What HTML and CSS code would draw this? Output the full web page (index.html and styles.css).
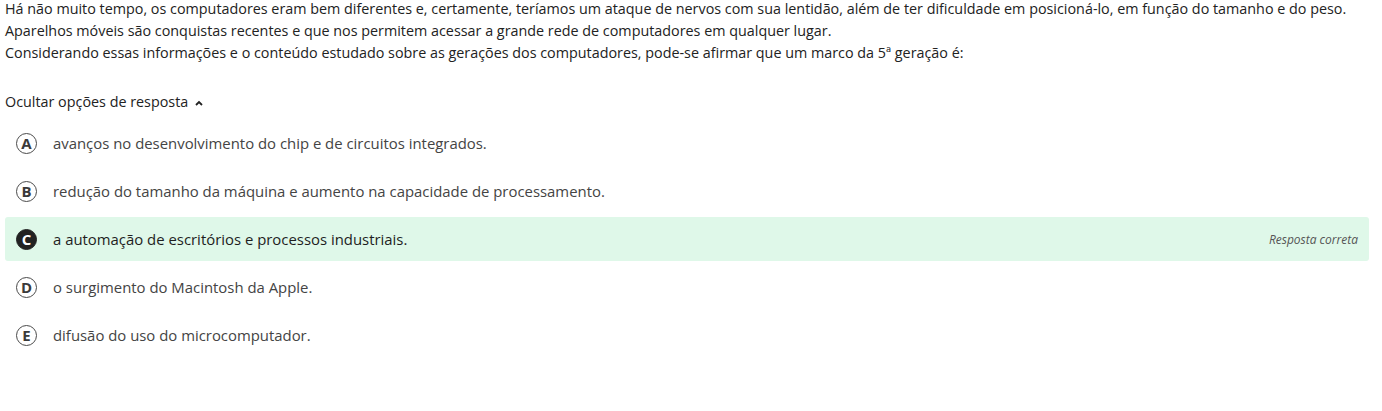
FILE: index.html
```html
<!DOCTYPE html>
<html lang="pt">
<head>
<meta charset="utf-8">
<link rel="stylesheet" href="styles.css">
</head>
<body>
<div class="page">
  <div class="question">
    <p>Há não muito tempo, os computadores eram bem diferentes e, certamente, teríamos um ataque de nervos com sua lentidão, além de ter dificuldade em posicioná-lo, em função do tamanho e do peso.</p>
    <p>Aparelhos móveis são conquistas recentes e que nos permitem acessar a grande rede de computadores em qualquer lugar.</p>
    <p>Considerando essas informações e o conteúdo estudado sobre as gerações dos computadores, pode-se afirmar que um marco da 5ª geração é:</p>
  </div>
  <div class="toggle">Ocultar opções de resposta
    <svg class="chev" width="8" height="6" viewBox="0 0 8 6"><path d="M1 5 L4 2 L7 5" fill="none" stroke="#222" stroke-width="1.8"/></svg>
  </div>
  <ul class="options">
    <li class="option"><span class="letter">A</span><span class="text">avanços no desenvolvimento do chip e de circuitos integrados.</span></li>
    <li class="option"><span class="letter">B</span><span class="text">redução do tamanho da máquina e aumento na capacidade de processamento.</span></li>
    <li class="option correct"><span class="letter">C</span><span class="text">a automação de escritórios e processos industriais.</span><span class="tag">Resposta correta</span></li>
    <li class="option"><span class="letter">D</span><span class="text">o surgimento do Macintosh da Apple.</span></li>
    <li class="option"><span class="letter">E</span><span class="text">difusão do uso do microcomputador.</span></li>
  </ul>
</div>
</body>
</html>
```
FILE: styles.css
```css
html, body { margin: 0; padding: 0; background: #fff; }
body { font-family: "Open Sans", "Liberation Sans", sans-serif; color: #222; font-size: 14.35px; }
.page { padding: 0 13px 0 5px; margin-top: -2px; }
.question p { margin: 0; line-height: 22px; }
.toggle { margin-top: 27px; line-height: 22px; display: flex; align-items: center; gap: 7px; }
.chev { margin-top: 1px; }
.options { list-style: none; margin: 8px 0 0; padding: 0; display: flex; flex-direction: column; gap: 4px; }
.option { display: flex; align-items: center; height: 44px; padding: 0 11px; border-radius: 3px; }
.letter { width: 19px; height: 19px; border: 1.6px solid #4a4a4a; border-radius: 50%; display: flex; align-items: center; justify-content: center; font-weight: 700; font-size: 15px; line-height: 1; color: #3a3a3a; flex: none; }
.text { margin-left: 16px; color: #444; font-size: 14.9px; }
.correct { background: #dff8e9; }
.correct .letter { background: #222; border-color: #222; color: #fff; }
.correct .text { color: #1e1e1e; }
.tag { margin-left: auto; font-style: italic; font-size: 12px; color: #555; }
```
